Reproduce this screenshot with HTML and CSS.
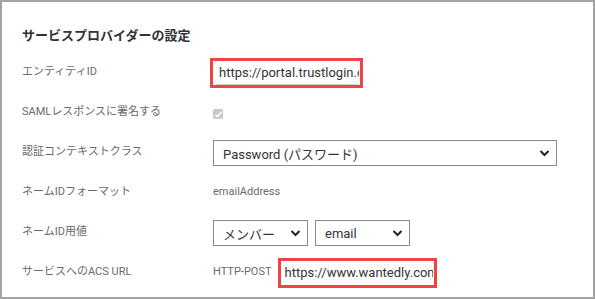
FILE: index.html
```html
<!DOCTYPE html>
<html lang="ja">
<head>
<meta charset="utf-8">
<link rel="stylesheet" href="styles.css">
</head>
<body>
<div class="panel">
  <h2 class="title">サービスプロバイダーの設定</h2>
  <div class="form">
    <div class="label">エンティティID</div>
    <div class="field">
      <div class="hl hl-entity"><div class="textbox">https://portal.trustlogin.com/</div></div>
    </div>

    <div class="label">SAMLレスポンスに署名する</div>
    <div class="field">
      <span class="check"><svg width="9" height="9" viewBox="0 0 9 9"><path d="M1.5 4.8 L3.6 6.8 L7.5 1.8" fill="none" stroke="#fff" stroke-width="1.4"/></svg></span>
    </div>

    <div class="label">認証コンテキストクラス</div>
    <div class="field">
      <div class="select select-wide"><span>Password (パスワード)</span><svg class="chev" width="11" height="8" viewBox="0 0 11 8"><path d="M1.5 2 L5.5 6 L9.5 2" fill="none" stroke="#222" stroke-width="2"/></svg></div>
    </div>

    <div class="label">ネームIDフォーマット</div>
    <div class="field"><span class="plain">emailAddress</span></div>

    <div class="label">ネームID用値</div>
    <div class="field pair">
      <div class="select select-small"><span>メンバー</span><svg class="chev" width="11" height="8" viewBox="0 0 11 8"><path d="M1.5 2 L5.5 6 L9.5 2" fill="none" stroke="#222" stroke-width="2"/></svg></div>
      <div class="select select-small"><span>email</span><svg class="chev" width="11" height="8" viewBox="0 0 11 8"><path d="M1.5 2 L5.5 6 L9.5 2" fill="none" stroke="#222" stroke-width="2"/></svg></div>
    </div>

    <div class="label">サービスへのACS URL</div>
    <div class="field acs">
      <span class="plain">HTTP-POST</span>
      <div class="hl hl-acs"><div class="textbox">https://www.wantedly.com/</div></div>
    </div>
  </div>
</div>
</body>
</html>
```
FILE: styles.css
```css
* { box-sizing: border-box; }
html, body { margin: 0; padding: 0; background: #fff; }
body {
  font-family: Roboto, "Noto Sans CJK JP", sans-serif;
}
.panel {
  width: 595px;
  height: 299px;
  border: 2px solid #a3a3a3;
  padding: 0 0 0 20px;
  overflow: hidden;
}
.title {
  margin: 0;
  padding-top: 25px;
  height: 51px;
  font-size: 13px;
  line-height: 18px;
  font-weight: bold;
  color: #333;
}
.form {
  display: grid;
  grid-template-columns: 191px 1fr;
  grid-auto-rows: 40px;
}
.label {
  font-size: 11px;
  line-height: 38px;
  color: #6a6a6a;
  white-space: nowrap;
}
.field {
  display: flex;
  align-items: center;
}
.hl {
  border: 3px solid #f04347;
  background: #fff;
  height: 30px;
  padding: 0 1px 0 3px;
}
.hl-entity { width: 153px; margin-left: -3px; }
.hl-acs { width: 159px; margin-left: 6px; }
.textbox {
  height: 24px;
  overflow: hidden;
  white-space: nowrap;
  font-size: 13px;
  line-height: 23px;
  color: #333;
  padding-left: 3px;
  border-bottom: 1px solid #cfcfcf;
}
.hl-acs .textbox { border-bottom: none; padding-left: 1px; line-height: 24px; }
.check {
  width: 10px;
  height: 10px;
  border-radius: 2px;
  background: #c8c8c8;
  display: inline-flex;
  align-items: center;
  justify-content: center;
  margin-top: 2px;
}
.select {
  height: 26px;
  border: 1px solid #8a8a8a;
  display: flex;
  align-items: center;
  justify-content: space-between;
  padding: 0 6px 0 9px;
  font-size: 13px;
  color: #333;
  background: #fff;
}
.select-wide { width: 344px; }
.select-small { width: 95px; }
.pair { gap: 7px; }
.chev { flex: none; }
.plain {
  font-size: 11px;
  color: #6a6a6a;
  margin-top: -4px;
}
.acs { align-items: center; }
```
